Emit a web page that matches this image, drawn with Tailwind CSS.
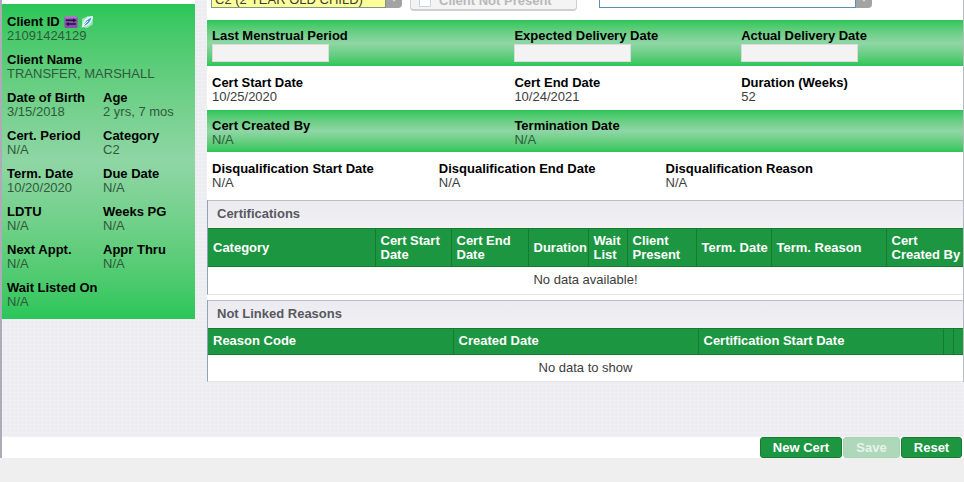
<!DOCTYPE html>
<html lang="en">
<head>
    <meta charset="UTF-8">
    <meta name="viewport" content="width=device-width, initial-scale=1.0">
    <title>Certifications</title>
    <script src="https://cdn.jsdelivr.net/npm/@tailwindcss/browser@4"></script>
</head>
<body class="min-h-screen bg-[#efefef] font-['Liberation_Sans',Arial,sans-serif] text-[13px] leading-[14px] text-[#3c3c3c]">
    <div class="border-l-2 border-[#aeaab8]">
        <div class="flex bg-[#ececf1] bg-[repeating-linear-gradient(90deg,rgba(255,255,255,0.2)_0_1px,transparent_1px_4px),repeating-linear-gradient(0deg,rgba(255,255,255,0.2)_0_1px,transparent_1px_4px)] pb-[55px]">

            <!-- Client summary -->
            <aside class="w-[193px] shrink-0 self-start border-t-4 border-white">
                <dl class="grid grid-cols-[96px_1fr] gap-y-2.5 bg-linear-to-b from-[#29c659] via-[#8fd6a5] to-[#29c659] pt-[11px] pb-2.5 pl-[5px] text-[#2f5a3c]">
                    <div class="col-span-2">
                        <dt class="flex items-center gap-0.5 font-bold text-black">Client ID
                            <svg class="ml-0.5 h-3.5 w-3.5" viewBox="0 0 14 14" aria-hidden="true">
                                <rect x="0.5" y="1" width="13" height="12" rx="1.5" fill="#8a4bb0"/>
                                <rect x="0.5" y="1" width="13" height="2.5" rx="1" fill="#a878c4"/>
                                <path d="M2 5.3h8M12 9H4" stroke="#26123a" stroke-width="1.6"/>
                                <path d="M9 3.2l3.5 2.1L9 7.4zM5 6.9L1.5 9 5 11.1z" fill="#26123a"/>
                            </svg>
                            <svg class="h-3.5 w-3.5" viewBox="0 0 14 14" aria-hidden="true">
                                <path d="M2 4l6-3 5 1.500-.5 7L7 13l-5-1z" fill="#a9e3c3"/>
                                <path d="M13 1C8.500 1.200 4.500 4 3 8L1.500 12.500 6 11C10 9.500 12.500 5.500 13 1z" fill="#eef8fc"/>
                                <path d="M11.500 2.500C7.500 4 4.500 7 3.500 11l2.500-1C9 8 10.800 6 11.500 2.500z" fill="#3a9ccc"/>
                                <path d="M2 12l6-6" stroke="#f5fbff" stroke-width="1"/>
                            </svg>
                        </dt>
                        <dd>21091424129</dd>
                    </div>
                    <div class="col-span-2">
                        <dt class="font-bold text-black">Client Name</dt>
                        <dd>TRANSFER, MARSHALL</dd>
                    </div>
                    <div>
                        <dt class="font-bold text-black">Date of Birth</dt>
                        <dd>3/15/2018</dd>
                    </div>
                    <div>
                        <dt class="font-bold text-black">Age</dt>
                        <dd>2 yrs, 7 mos</dd>
                    </div>
                    <div>
                        <dt class="font-bold text-black">Cert. Period</dt>
                        <dd>N/A</dd>
                    </div>
                    <div>
                        <dt class="font-bold text-black">Category</dt>
                        <dd>C2</dd>
                    </div>
                    <div>
                        <dt class="font-bold text-black">Term. Date</dt>
                        <dd>10/20/2020</dd>
                    </div>
                    <div>
                        <dt class="font-bold text-black">Due Date</dt>
                        <dd>N/A</dd>
                    </div>
                    <div>
                        <dt class="font-bold text-black">LDTU</dt>
                        <dd>N/A</dd>
                    </div>
                    <div>
                        <dt class="font-bold text-black">Weeks PG</dt>
                        <dd>N/A</dd>
                    </div>
                    <div>
                        <dt class="font-bold text-black">Next Appt.</dt>
                        <dd>N/A</dd>
                    </div>
                    <div>
                        <dt class="font-bold text-black">Appr Thru</dt>
                        <dd>N/A</dd>
                    </div>
                    <div class="col-span-2">
                        <dt class="font-bold text-black">Wait Listed On</dt>
                        <dd>N/A</dd>
                    </div>
                </dl>
            </aside>

            <!-- Certification details -->
            <main class="ml-3 min-w-0 flex-1 border-r border-[#b9b9c4] bg-white">
                <div class="mb-[9px] flex h-[11px] items-end overflow-hidden pl-1">
                    <div class="mb-[3px] flex">
                        <select aria-label="Category" class="h-5 w-[175px] appearance-none border border-[#7b9a86] bg-[#ffff99] px-[3px] pt-1 text-[#3c3c3c]">
                            <option>C2 (2 YEAR OLD CHILD)</option>
                        </select>
                        <button aria-label="Open category list" class="flex h-5 w-4 items-center justify-center rounded-br-sm bg-[#a3a3a3] pt-1">
                            <svg class="h-2 w-2" viewBox="0 0 8 8"><path d="M1 2h6L4 6z" fill="#d8d8d8"/></svg>
                        </button>
                    </div>
                    <label class="ml-2 flex h-5 w-[167px] items-center gap-2 rounded-sm border border-b-2 border-[#cfcfcf] bg-[#f4f4f4] pl-2 font-bold text-[#b8b8b8]">
                        <input type="checkbox" disabled class="h-3 w-3 appearance-none border border-[#c3d5e4] bg-white">
                        Client Not Present
                    </label>
                    <div class="mb-[3px] ml-[22px] flex">
                        <select aria-label="Reason" class="h-5 w-[257px] appearance-none border border-[#5b8fb0] bg-white px-[3px] pt-1">
                            <option></option>
                        </select>
                        <button aria-label="Open reason list" class="flex h-5 w-4 items-center justify-center rounded-br-sm bg-[#a3a3a3] pt-1">
                            <svg class="h-2 w-2" viewBox="0 0 8 8"><path d="M1 2h6L4 6z" fill="#d8d8d8"/></svg>
                        </button>
                    </div>
                </div>

                <div class="grid grid-cols-10 bg-linear-to-b from-[#29c659] via-[#8fd6a5] to-[#29c659] pt-[9px] pb-1">
                    <div class="col-span-4 pl-[5px]">
                        <label for="lmp" class="block font-bold text-black">Last Menstrual Period</label>
                        <input id="lmp" type="text" class="mt-px block h-[18px] w-[117px] border border-[#dcdcdc] bg-[#f3f3f3] px-1">
                    </div>
                    <div class="col-span-3 pl-[5px]">
                        <label for="edd" class="block font-bold text-black">Expected Delivery Date</label>
                        <input id="edd" type="text" class="mt-px block h-[18px] w-[117px] border border-[#dcdcdc] bg-[#f3f3f3] px-1">
                    </div>
                    <div class="col-span-3 pl-[5px]">
                        <label for="add" class="block font-bold text-black">Actual Delivery Date</label>
                        <input id="add" type="text" class="mt-px block h-[18px] w-[117px] border border-[#dcdcdc] bg-[#f3f3f3] px-1">
                    </div>
                </div>

                <dl class="grid grid-cols-10 pt-2.5 pb-1.5">
                    <div class="col-span-4 pl-[5px]">
                        <dt class="font-bold text-black">Cert Start Date</dt>
                        <dd>10/25/2020</dd>
                    </div>
                    <div class="col-span-3 pl-[5px]">
                        <dt class="font-bold text-black">Cert End Date</dt>
                        <dd>10/24/2021</dd>
                    </div>
                    <div class="col-span-3 pl-[5px]">
                        <dt class="font-bold text-black">Duration (Weeks)</dt>
                        <dd>52</dd>
                    </div>
                </dl>

                <dl class="grid grid-cols-10 bg-linear-to-b from-[#29c659] via-[#8fd6a5] to-[#29c659] pt-[9px] pb-[5px] text-[#2f5a3c]">
                    <div class="col-span-4 pl-[5px]">
                        <dt class="font-bold text-black">Cert Created By</dt>
                        <dd>N/A</dd>
                    </div>
                    <div class="col-span-6 pl-[5px]">
                        <dt class="font-bold text-black">Termination Date</dt>
                        <dd>N/A</dd>
                    </div>
                </dl>

                <dl class="grid grid-cols-10 pt-2.5 pb-2.5">
                    <div class="col-span-3 pl-[5px]">
                        <dt class="font-bold text-black">Disqualification Start Date</dt>
                        <dd>N/A</dd>
                    </div>
                    <div class="col-span-3 pl-[5px]">
                        <dt class="font-bold text-black">Disqualification End Date</dt>
                        <dd>N/A</dd>
                    </div>
                    <div class="col-span-4 pl-[5px]">
                        <dt class="font-bold text-black">Disqualification Reason</dt>
                        <dd>N/A</dd>
                    </div>
                </dl>

                <!-- Certifications -->
                <section class="mb-[5px] border-b border-l border-b-[#e6e6e6] border-l-[#8fa3b8]">
                    <h2 class="border-t border-[#bdbdc6] bg-linear-to-b from-[#ebebf0] to-[#f1f1f4] pt-1.5 pb-[7px] pl-[9px] font-bold text-[#58585f]">Certifications</h2>
                    <table class="w-full table-fixed border-collapse">
                        <thead>
                            <tr class="h-[38px] border-y border-[#177a31] bg-[#1d9641] text-left text-white">
                                <th class="border-r border-[#177a31] pl-[5px]">Category</th>
                                <th class="w-[76px] border-r border-[#177a31] pl-[5px]">Cert Start Date</th>
                                <th class="w-[77px] border-r border-[#177a31] pl-[5px]">Cert End Date</th>
                                <th class="w-[60px] border-r border-[#177a31] pl-[5px]">Duration</th>
                                <th class="w-[39px] border-r border-[#177a31] pl-[5px]">Wait List</th>
                                <th class="w-[69px] border-r border-[#177a31] pl-[5px]">Client Present</th>
                                <th class="w-[75px] border-r border-[#177a31] pl-[5px]">Term. Date</th>
                                <th class="w-[115px] border-r border-[#177a31] pl-[5px]">Term. Reason</th>
                                <th class="w-[77px] pl-[5px]">Cert<br>Created By</th>
                            </tr>
                        </thead>
                        <tbody>
                            <tr class="h-[27px]"><td colspan="9" class="text-center">No data available!</td></tr>
                        </tbody>
                    </table>
                </section>

                <!-- Not linked reasons -->
                <section class="border-b border-l border-b-[#e6e6e6] border-l-[#8fa3b8]">
                    <h2 class="border-t border-[#bdbdc6] bg-linear-to-b from-[#ebebf0] to-[#f1f1f4] pt-1.5 pb-[7px] pl-[9px] font-bold text-[#58585f]">Not Linked Reasons</h2>
                    <table class="w-full table-fixed border-collapse">
                        <thead>
                            <tr class="h-[26px] border-y border-[#177a31] bg-[#1d9641] text-left text-white">
                                <th class="border-r border-[#177a31] pl-[5px]">Reason Code</th>
                                <th class="border-r border-[#177a31] pl-[5px]">Created Date</th>
                                <th class="border-r border-[#177a31] pl-[5px]">Certification Start Date</th>
                                <td class="w-2.5 border-r border-[#177a31]"></td>
                                <td class="w-2.5"></td>
                            </tr>
                        </thead>
                        <tbody>
                            <tr class="h-[27px]"><td colspan="5" class="text-center">No data to show</td></tr>
                        </tbody>
                    </table>
                </section>
            </main>
        </div>

        <!-- Action buttons -->
        <footer class="flex justify-end gap-px bg-white pr-0.5">
            <button class="h-[21px] w-[82px] rounded-[3px] border border-[#177a31] bg-[#1d9641] font-bold text-white">New Cert</button>
            <button disabled class="h-[21px] w-[57px] rounded-[3px] border border-[#a6d4b3] bg-[#afd8bb] font-bold text-[#e6f3ea]">Save</button>
            <button class="h-[21px] w-[61px] rounded-[3px] border border-[#177a31] bg-[#1d9641] font-bold text-white">Reset</button>
        </footer>
    </div>
</body>
</html>
